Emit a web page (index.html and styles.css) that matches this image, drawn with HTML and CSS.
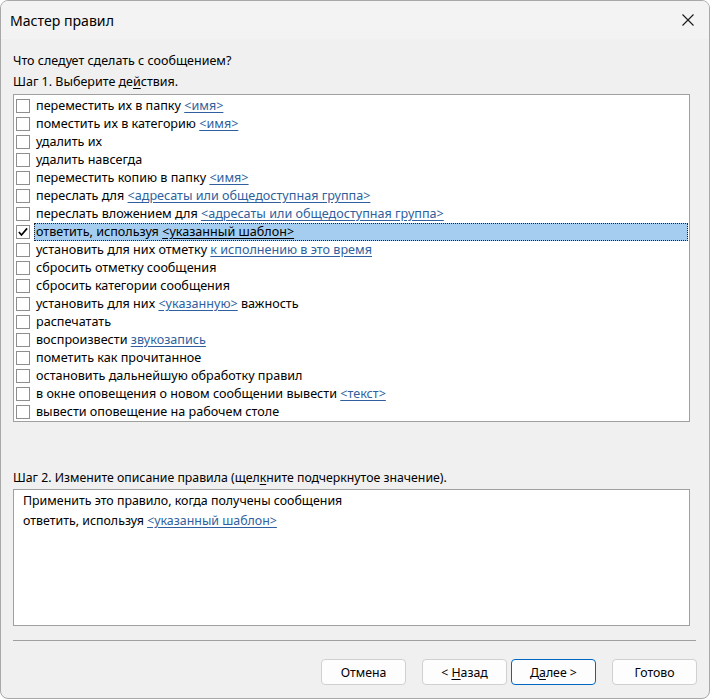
FILE: index.html
```html
<!DOCTYPE html>
<html lang="ru">
<head>
<meta charset="utf-8">
<title>Мастер правил</title>
<link rel="stylesheet" href="styles.css">
</head>
<body>
<div class="window">
  <div class="titlebar">
    <span class="title">Мастер правил</span>
    <span class="close" aria-label="Закрыть">
      <svg width="12" height="12" viewBox="0 0 12 12"><path d="M0.5 0.5L11.5 11.5M11.5 0.5L0.5 11.5" stroke="#1a1a1a" stroke-width="1.1" fill="none"/></svg>
    </span>
  </div>
  <div class="content">
    <div class="label first">Что следует сделать с сообщением?</div>
    <div class="label">Шаг 1. Выберите де<u>й</u>ствия.</div>
    <div class="listbox">
      <div class="row"><span class="cb"></span><span class="txt">переместить их в папку <a>&lt;имя&gt;</a></span></div>
      <div class="row"><span class="cb"></span><span class="txt">поместить их в категорию <a>&lt;имя&gt;</a></span></div>
      <div class="row"><span class="cb"></span><span class="txt">удалить их</span></div>
      <div class="row"><span class="cb"></span><span class="txt">удалить навсегда</span></div>
      <div class="row"><span class="cb"></span><span class="txt">переместить копию в папку <a>&lt;имя&gt;</a></span></div>
      <div class="row"><span class="cb"></span><span class="txt">переслать для <a>&lt;адресаты или общедоступная группа&gt;</a></span></div>
      <div class="row"><span class="cb"></span><span class="txt">переслать вложением для <a>&lt;адресаты или общедоступная группа&gt;</a></span></div>
      <div class="row selected"><span class="cb checked"><svg width="14" height="14" viewBox="0 0 14 14"><path d="M2.2 7L5.2 10.4L11.8 2.8" stroke="#000" stroke-width="1.9" fill="none"/></svg></span><span class="txt">ответить, используя <a>&lt;указанный шаблон&gt;</a></span></div>
      <div class="row"><span class="cb"></span><span class="txt">установить для них отметку <a>к исполнению в это время</a></span></div>
      <div class="row"><span class="cb"></span><span class="txt">сбросить отметку сообщения</span></div>
      <div class="row"><span class="cb"></span><span class="txt">сбросить категории сообщения</span></div>
      <div class="row"><span class="cb"></span><span class="txt">установить для них <a>&lt;указанную&gt;</a> важность</span></div>
      <div class="row"><span class="cb"></span><span class="txt">распечатать</span></div>
      <div class="row"><span class="cb"></span><span class="txt">воспроизвести <a>звукозапись</a></span></div>
      <div class="row"><span class="cb"></span><span class="txt">пометить как прочитанное</span></div>
      <div class="row"><span class="cb"></span><span class="txt">остановить дальнейшую обработку правил</span></div>
      <div class="row"><span class="cb"></span><span class="txt">в окне оповещения о новом сообщении вывести <a>&lt;текст&gt;</a></span></div>
      <div class="row"><span class="cb"></span><span class="txt">вывести оповещение на рабочем столе</span></div>
    </div>
    <div class="label step2">Шаг 2. Измените описание правила (щел<u>к</u>ните подчеркнутое значение).</div>
    <div class="descbox">
      <div class="dline">Применить это правило, когда получены сообщения</div>
      <div class="dline">ответить, используя <a>&lt;указанный шаблон&gt;</a></div>
    </div>
    <div class="separator"></div>
    <div class="buttons">
      <button class="btn">Отмена</button>
      <button class="btn gap-big">&lt; <u>Н</u>азад</button>
      <button class="btn default">Д<u>а</u>лее &gt;</button>
      <button class="btn gap-big">Готово</button>
    </div>
  </div>
</div>
</body>
</html>
```
FILE: styles.css
```css
* { box-sizing: border-box; }
html, body { margin: 0; padding: 0; background: #ffffff; }
body { font-family: "Noto Sans", "Open Sans", sans-serif; font-size: 12px; color: #000; }

.window {
  width: 710px;
  height: 699px;
  background: #f0f0f0;
  border: 1px solid #a8a8a8;
  border-radius: 8px;
  overflow: hidden;
}

.titlebar {
  height: 38px;
  display: flex;
  align-items: center;
  justify-content: space-between;
  padding: 0 15px 0 9px;
  background: #f3f3f3;
}
.title { font-size: 14.1px; color: #000; }
.close { display: flex; width: 12px; height: 12px; }

.content { padding: 11px 0 0 12px; }

.label { height: 21px; line-height: 21px; white-space: nowrap; font-size: 12.5px; }
.label.step2 { margin-top: 46px; height: 20px; line-height: 20px; font-size: 12.3px; }
u { text-decoration: underline; text-underline-offset: 2px; }

.listbox {
  margin-top: 2px;
  width: 677px;
  height: 328px;
  background: #fff;
  border: 1px solid #a0a0a0;
  padding: 2px 0 0 2px;
  font-size: 12.6px;
}
.row { height: 18px; display: flex; align-items: center; }
.cb {
  width: 14px; height: 14px;
  border: 1px solid #8e8e8e;
  background: #fff;
  flex: none;
  display: flex; align-items: center; justify-content: center;
}
.cb svg { display: block; }
.txt {
  margin-left: 4px;
  padding-left: 2px;
  height: 18px;
  line-height: 18px;
  flex: 1;
  margin-right: 1px;
  white-space: nowrap;
}
.row.selected .txt {
  background: #a4cdf0;
  outline: 1px dotted #222;
  outline-offset: -1px;
}
a { color: #2f5f9e; text-decoration: underline; text-underline-offset: 2px; }
.row.selected a { color: #000; }

.descbox {
  margin-top: 1px;
  width: 677px;
  height: 137px;
  background: #fff;
  border: 1px solid #a0a0a0;
  padding: 1px 9px;
  font-size: 12.4px;
}
.dline { height: 20px; line-height: 20px; white-space: nowrap; }

.separator {
  margin-top: 14px;
  width: 683px;
  height: 1px;
  background: #a0a0a0;
}

.buttons {
  display: flex;
  justify-content: flex-end;
  width: 684px;
  margin-top: 18px;
  gap: 4px;
}
.btn {
  width: 85px;
  height: 26px;
  font-family: inherit;
  font-size: 12.3px;
  color: #000;
  background: #fdfdfd;
  border: 1px solid #d0d0d0;
  border-radius: 4px;
  padding: 0;
}
.btn.gap-big { margin-left: 12px; }
.btn.default { border-color: #0067c0; }
```
